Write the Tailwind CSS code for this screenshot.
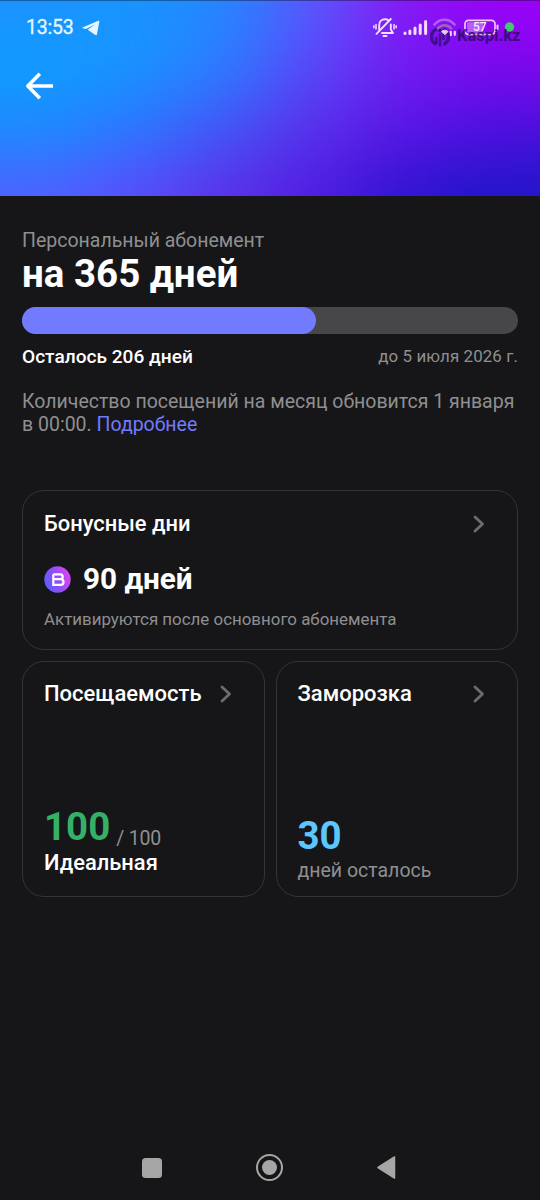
<!DOCTYPE html>
<html lang="ru">
<head>
<meta charset="utf-8">
<title>Абонемент</title>
<script src="https://cdn.jsdelivr.net/npm/@tailwindcss/browser@4"></script>
</head>
<body class="bg-[#161618]">
<div class="w-[540px] h-[1200px] overflow-hidden bg-[#161618] text-white font-['Roboto',sans-serif] flex flex-col whitespace-nowrap">

  <header class="relative h-[196px] shrink-0 overflow-hidden">
    <svg class="absolute inset-0" width="540" height="196" viewBox="0 0 540 196">
      <defs><filter id="soft" filterUnits="userSpaceOnUse" x="-200" y="-200" width="940" height="600" color-interpolation-filters="sRGB"><feGaussianBlur stdDeviation="38 30"/></filter></defs>
      <g filter="url(#soft)" shape-rendering="crispEdges">
        <rect x="-200" y="-200" width="290" height="232" fill="#1c90ff"/><rect x="90" y="-200" width="90" height="232" fill="#1894ff"/><rect x="180" y="-200" width="90" height="232" fill="#2486ff"/><rect x="270" y="-200" width="90" height="232" fill="#5a58ff"/><rect x="360" y="-200" width="90" height="232" fill="#8a16f4"/><rect x="450" y="-200" width="290" height="232" fill="#9c02fa"/>
        <rect x="-200" y="32" width="290" height="66" fill="#109cff"/><rect x="90" y="32" width="90" height="66" fill="#1894ff"/><rect x="180" y="32" width="90" height="66" fill="#2c7cff"/><rect x="270" y="32" width="90" height="66" fill="#5a46f8"/><rect x="360" y="32" width="90" height="66" fill="#721af0"/><rect x="450" y="32" width="290" height="66" fill="#7c08ec"/>
        <rect x="-200" y="98" width="290" height="64" fill="#1c8aff"/><rect x="90" y="98" width="90" height="64" fill="#2c76ff"/><rect x="180" y="98" width="90" height="64" fill="#4454f6"/><rect x="270" y="98" width="90" height="64" fill="#5a2eea"/><rect x="360" y="98" width="90" height="64" fill="#5a14e6"/><rect x="450" y="98" width="290" height="64" fill="#4c10de"/>
        <rect x="-200" y="162" width="290" height="240" fill="#5060ff"/><rect x="90" y="162" width="90" height="240" fill="#5a4cfa"/><rect x="180" y="162" width="90" height="240" fill="#5c30e8"/><rect x="270" y="162" width="90" height="240" fill="#501ce0"/><rect x="360" y="162" width="90" height="240" fill="#2e14d0"/><rect x="450" y="162" width="290" height="240" fill="#2016c8"/>
      </g>
      <rect width="540" height="1" fill="#000" fill-opacity=".35"/>
    </svg>
    <div class="relative flex items-center h-[56px] pl-[26px] text-[#e4f7ff]">
      <span class="w-[48px] text-[19.5px] leading-none tracking-[-0.2px] [-webkit-text-stroke:0.3px_#e4f7ff]">13:53</span>
      <svg class="ml-[8px]" width="18" height="16" viewBox="0 0 18 16"><path d="M.5 7.600 15.800.9c1-.4 1.700.1 1.500 1.100l-2.400 12.400c-.2.9-.9 1.100-1.500.6L5.700 9.700 12.800 4.400 4 8.900.7 8.300C.1 8.200 0 7.900.5 7.600Z" fill="currentColor"/></svg>
    </div>
    <svg class="absolute left-[370px] top-[14px]" width="160" height="36" viewBox="0 0 160 36">
      <g fill="none" stroke="#f7dcff" stroke-width="1.900" stroke-linecap="round" stroke-linejoin="round">
        <path d="M9.200 16V11C9.200 7.800 11.500 5.300 15 5.300c1.300 0 2.500.4 3.500 1.100M20.800 10.500V15.500L23 19H12M6.500 19.800 20.800 5"/>
        <path d="M6 10.500v4.500M3.900 11.800v2M24 10.500v4.500M26.100 11.800v2" stroke-width="1.500"/>
        <path d="M13.500 22h3" stroke-width="2"/>
      </g>
      <path d="M35 19.400v-.4M39.900 19.400v-2.500M45 19.400v-5.400M50.200 19.400v-8.400M55.600 19.400V7.400" stroke="#f7dcff" stroke-width="3" stroke-linecap="round"/>
      <g fill="none" stroke-linecap="round">
        <path d="M64.500 10.500c5.500-6.300 14.500-6.300 20 0" stroke="#b45cf7" stroke-width="2.600"/>
        <path d="M67.800 14.300c3.700-4.100 9.700-4.100 13.400 0" stroke="#9a66b8" stroke-width="2.600"/>
        <path d="M80.700 17.800v3.400M84.800 17.800v3" stroke="#f0d0fa" stroke-width="2.200"/>
      </g>
      <rect x="95" y="6.300" width="30" height="14" rx="3.500" fill="none" stroke="#efc8fb" stroke-width="1.700"/>
      <rect x="97" y="8.200" width="16" height="10.200" rx="1" fill="#b95df5"/>
      <path d="M127.500 11.500v4" stroke="#efc8fb" stroke-width="2" stroke-linecap="round"/>
      <text x="109.800" y="17.400" text-anchor="middle" font-family="Roboto" font-size="12" font-weight="500" fill="#fbeaff">57</text>
      <circle cx="139.500" cy="13" r="4.700" fill="#3fca6c"/>
      <g fill="none" stroke="#34107a" stroke-opacity=".82">
        <path d="M67 15a8.400 8.400 0 0 0-.5 15.500M73 15a8.400 8.400 0 0 1 .5 15.500" stroke-width="3.400"/>
        <path d="M70 19.500v13M66.300 23v7M73.500 19v7" stroke-width="2.500"/>
        <circle cx="70" cy="16.500" r="1.800" fill="#34107a" stroke="none"/>
      </g>
      <path d="M71.500 17.500c2-1.800 4.500-1.800 6.500 0l-3 3.200Z" fill="#e9c9f5" stroke="#e9c9f5"/>
      <text x="87" y="27" textLength="63.500" lengthAdjust="spacingAndGlyphs" font-family="Roboto" font-size="16.500" font-weight="800" fill="#2b0d66" fill-opacity=".8">Kaspi.kz</text>
    </svg>
    <svg class="absolute left-[24px] top-[70px]" width="32" height="32" viewBox="0 0 32 32"><path d="M15.800 3.800 3.800 16 15.800 28.200M4.500 16H29" fill="none" stroke="#fff" stroke-width="3.600" stroke-linejoin="round"/></svg>
  </header>

  <main class="px-[22px] pt-[33px]">
    <p class="text-[19.5px] leading-[24px] text-[#8f8f91]">Персональный абонемент</p>
    <h1 class="mt-[-1px] text-[38.5px] leading-[44px] font-bold">на 365 дней</h1>
    <div class="mt-[11px] h-[27px] rounded-full bg-[#474749]"><div class="h-full w-[294px] rounded-full bg-[#727aff]"></div></div>
    <div class="mt-[11px] flex justify-between">
      <span class="text-[19.1px] leading-[24px] font-medium">Осталось 206 дней</span>
      <span class="pt-px text-[16.900px] leading-[20px] tracking-[0.1px] text-[#8f8f91]">до 5 июля 2026 г.</span>
    </div>
    <p class="mt-[21px] text-[19.5px] leading-[23px] text-[#8f8f91]">Количество посещений на месяц обновится 1 января<br>в 00:00. <a class="text-[#727aff]">Подробнее</a></p>

    <section class="mt-[54px] h-[160px] rounded-[22px] border border-[#343436] px-[21px] pt-[19px]">
      <div class="flex items-center justify-between pr-[11px]">
        <h2 class="pt-px text-[21.900px] leading-[26px] font-medium">Бонусные дни</h2>
        <svg width="12" height="18" viewBox="0 0 12 18"><path d="M2 2 9.500 9 2 16" fill="none" stroke="#6c6c6e" stroke-width="2.800" stroke-linecap="round" stroke-linejoin="round"/></svg>
      </div>
      <div class="mt-[24px] flex items-center gap-[12px]">
        <svg width="27" height="27" viewBox="0 0 27 27"><defs><linearGradient id="coin" x1="0" y1=".7" x2="1" y2=".3"><stop offset="0" stop-color="#5b5cff"/><stop offset=".5" stop-color="#964df8"/><stop offset="1" stop-color="#e044f0"/></linearGradient></defs><circle cx="13.500" cy="13.500" r="13.200" fill="url(#coin)"/><path d="M9.300 8.300h7c3.200 0 3.200 4.900 0 4.900h-7V8.300M9.300 13.200h7.500c3.600 0 3.600 5.600 0 5.600h-7.500V13" fill="none" stroke="#fff" stroke-width="2.200"/></svg>
        <span class="text-[29.700px] leading-[36px] font-bold">90 дней</span>
      </div>
      <p class="mt-[12px] text-[16.900px] leading-[20px] text-[#8f8f91]">Активируются после основного абонемента</p>
    </section>

    <div class="mt-[11px] grid grid-cols-2 gap-[11px]">
      <section class="flex h-[236px] flex-col rounded-[22px] border border-[#343436] px-[21px] pt-[19px] pb-[20px]">
        <div class="flex items-center justify-between pr-[11px]">
          <h2 class="text-[22px] leading-[26px] font-medium">Посещаемость</h2>
          <svg width="12" height="18" viewBox="0 0 12 18"><path d="M2 2 9.500 9 2 16" fill="none" stroke="#6c6c6e" stroke-width="2.800" stroke-linecap="round" stroke-linejoin="round"/></svg>
        </div>
        <div class="mt-auto flex items-end gap-[6px]">
          <span class="text-[38.5px] leading-[46px] font-bold text-[#35b067]">100</span>
          <span class="translate-y-px text-[19.5px] leading-[24px] tracking-[-0.2px] text-[#8f8f91]">/ 100</span>
        </div>
        <p class="text-[21.900px] leading-[26px] font-medium">Идеальная</p>
      </section>
      <section class="flex h-[236px] flex-col rounded-[22px] border border-[#343436] px-[21px] pt-[19px] pb-[13px]">
        <div class="flex items-center justify-between pr-[11px]">
          <h2 class="text-[22px] leading-[26px] font-medium">Заморозка</h2>
          <svg width="12" height="18" viewBox="0 0 12 18"><path d="M2 2 9.500 9 2 16" fill="none" stroke="#6c6c6e" stroke-width="2.800" stroke-linecap="round" stroke-linejoin="round"/></svg>
        </div>
        <span class="mt-auto text-[38.5px] leading-[46px] font-bold text-[#5cc6ff]">30</span>
        <p class="text-[19.5px] leading-[24px] text-[#8f8f91]">дней осталось</p>
      </section>
    </div>
  </main>

  <nav class="mt-auto mb-[18px] flex h-[28px] items-center pl-[142px]">
    <svg width="20" height="20" viewBox="0 0 20 20"><rect width="20" height="20" rx="3.500" fill="#a6a6a6"/></svg>
    <svg class="ml-[94px]" width="28" height="28" viewBox="0 0 28 28"><circle cx="13.500" cy="13.500" r="12.500" fill="none" stroke="#a6a6a6" stroke-width="2"/><circle cx="13.500" cy="13.500" r="7.500" fill="#a6a6a6"/></svg>
    <svg class="ml-[92px]" width="20" height="24" viewBox="0 0 20 24"><path d="M18.500 1v21L2 11.500Z" fill="#a6a6a6" stroke="#a6a6a6" stroke-width="1.500" stroke-linejoin="round"/></svg>
  </nav>
</div>
</body>
</html>
